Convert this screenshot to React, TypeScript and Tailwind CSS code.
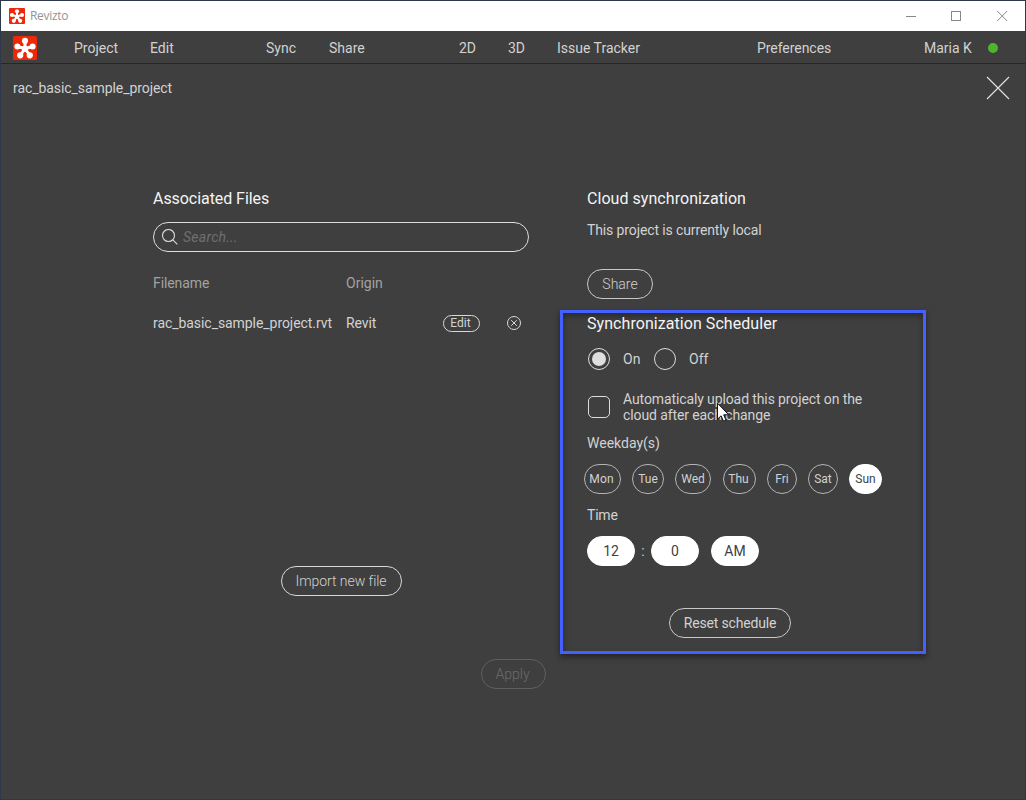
import React from "react";

const menu = [
  { label: "Project", cls: "w-[76px]" },
  { label: "Edit", cls: "w-[116px]" },
  { label: "Sync", cls: "w-[63px]" },
  { label: "Share", cls: "w-[130px]" },
  { label: "2D", cls: "w-[49px]" },
  { label: "3D", cls: "w-[49px]" },
  { label: "Issue Tracker", cls: "w-[200px]" },
  { label: "Preferences", cls: "w-[167px] tracking-[-0.05px]" },
  { label: "Maria K", cls: "w-[64px]" },
];

const days = [
  { label: "Mon", cls: "w-[37px] pr-[2px] tracking-[0.2px]" },
  { label: "Tue", cls: "w-[32px] ml-[11px]" },
  { label: "Wed", cls: "w-[36px] ml-[11px]" },
  { label: "Thu", cls: "w-[33px] ml-[12px] pr-[2px]" },
  { label: "Fri", cls: "w-[30px] ml-[11px]" },
  { label: "Sat", cls: "w-[30px] ml-[11px]" },
  { label: "Sun", cls: "w-[33px] ml-[11px]", active: true },
];

function Logo({ className }: { className: string }) {
  return (
    <svg viewBox="0 0 24 24" className={className}>
      <rect width="24" height="24" rx="1.5" fill="#ee2708" />
      <g stroke="#fff" strokeWidth="3">
        <path d="M12 12.5V6M12 12.5L5 10.8M12 12.5L19 10.8M12 12.5L7.8 18.5M12 12.5L16.2 18.5" />
      </g>
      <g fill="#fff">
        <circle cx="12" cy="12.8" r="3.2" />
        <circle cx="12" cy="4.8" r="3.1" />
        <circle cx="4.4" cy="10.6" r="3" />
        <circle cx="19.6" cy="10.6" r="3" />
        <circle cx="7.2" cy="19.3" r="3.1" />
        <circle cx="16.8" cy="19.3" r="3.1" />
      </g>
    </svg>
  );
}

function PillButton({ children, className = "" }: { children: React.ReactNode; className?: string }) {
  return (
    <button className={`flex h-[30px] items-center justify-center rounded-full border ${className}`}>
      {children}
    </button>
  );
}

function Heading({ children, className = "" }: { children: React.ReactNode; className?: string }) {
  return (
    <h2 className={`h-5 pt-px text-[16px] leading-5 text-[#f4f4f4] whitespace-nowrap ${className}`}>{children}</h2>
  );
}

export default function App() {
  return (
    <div
      className="flex h-[800px] w-[1026px] flex-col overflow-hidden border border-[#2d394a] bg-[#3f3f3f] text-[14px] text-[#d2d2d2]"
      style={{ fontFamily: 'Roboto, "Liberation Sans", sans-serif' }}
    >
      <header className="flex h-[30px] shrink-0 items-center bg-white pl-2">
        <Logo className="size-4" />
        <span
          className="ml-[5px] text-[12px] tracking-[-0.3px] text-[#949494]"
          style={{ fontFamily: '"Open Sans", "Noto Sans", sans-serif' }}
        >
          Revizto
        </span>
        <svg className="ml-auto mr-[17px] h-[11px] w-[102px]" viewBox="0 0 102 11" fill="none" stroke="#888">
          <path d="M0 5.5H10M45.5 .5H54.5V9.5H45.5Z" shapeRendering="crispEdges" />
          <path d="M91.2 0L101.2 10M101.2 0L91.2 10" />
        </svg>
      </header>

      <nav className="flex h-[33px] shrink-0 items-center border-b border-[#272727] pl-3">
        <Logo className="mt-[2px] size-6" />
        <div className="ml-[37px] flex pt-[2px]">
          {menu.map((m) => (
            <span key={m.label} className={`${m.cls} whitespace-nowrap leading-5`}>
              {m.label}
            </span>
          ))}
        </div>
        <span className="mt-[2px] size-[10px] rounded-full bg-[#4eb52d]" />
      </nav>

      <div className="flex h-12 shrink-0 items-center justify-between pr-[15px] pl-3">
        <span className="leading-5 tracking-[-0.07px]">rac_basic_sample_project</span>
        <svg className="size-6" viewBox="0 0 24 24" stroke="#e4e4e4" strokeWidth="1.1">
          <path d="M1 1L23 23M23 1L1 23" />
        </svg>
      </div>

      <main className="flex shrink-0 pt-[76px] pl-[152px]">
        <section className="flex w-[376px] flex-col">
          <Heading className="tracking-[-0.06px]">Associated Files</Heading>
          <div className="mt-[14px] flex h-[30px] items-center rounded-full border border-[#dedede] pl-2">
            <svg className="size-4" viewBox="0 0 16 16" fill="none" stroke="#dedede" strokeWidth="1.1">
              <circle cx="6.5" cy="6.5" r="6" />
              <path d="M10.8 10.8L15.3 15.3" />
            </svg>
            <span className="ml-[5px] italic tracking-[0.25px] text-[#6f6f6f]">Search...</span>
          </div>
          <div className="mt-[21px] flex h-5 items-center text-[#a2a2a2]">
            <span className="w-[193px] tracking-[-0.1px]">Filename</span>
            <span>Origin</span>
          </div>
          <div className="mt-5 flex h-5 items-center">
            <span className="w-[193px] whitespace-nowrap tracking-[-0.06px]">rac_basic_sample_project.rvt</span>
            <span className="w-[97px] tracking-[-0.1px]">Revit</span>
            <button className="flex h-[17px] w-[37px] items-center justify-center rounded-full border border-[#d8d8d8] pr-[2px] text-[12px]">
              Edit
            </button>
            <svg className="ml-[26px] size-4" viewBox="0 0 16 16" fill="none" stroke="#d8d8d8">
              <circle cx="8" cy="8" r="6.5" />
              <path d="M5.2 5.2L10.8 10.8M10.8 5.2L5.2 10.8" />
            </svg>
          </div>
          <PillButton className="mt-[233px] w-[121px] self-center border-[#d8d8d8] font-light tracking-[-0.05px]">
            Import new file
          </PillButton>
        </section>

        <section className="ml-[31px] flex w-[366px] flex-col">
          <div className="flex flex-col pl-[27px]">
            <Heading className="tracking-[0.05px]">Cloud synchronization</Heading>
            <p className="mt-3 leading-5 tracking-[-0.12px]">This project is currently local</p>
            <PillButton className="mt-[29px] w-[66px] border-[#c8c8c8] font-light">Share</PillButton>
          </div>

          <div className="mt-[11px] flex h-[344px] flex-col border-[3px] border-[#4461ff] pl-6 shadow-[0_3px_6px_rgba(0,0,0,0.45),inset_0_3px_6px_rgba(0,0,0,0.35)]">
            <Heading className="tracking-[0.06px]">Synchronization Scheduler</Heading>
            <div className="mt-[15px] flex h-[22px] items-center pl-px">
              <span className="flex size-[22px] items-center justify-center rounded-full border border-[#dcdcdc]">
                <span className="size-[14px] rounded-full bg-[#dedede]" />
              </span>
              <span className="ml-[13px] w-[31px]">On</span>
              <span className="size-[22px] rounded-full border border-[#dcdcdc]" />
              <span className="ml-[13px]">Off</span>
            </div>
            <div className="relative mt-[21px] flex h-8 items-center pl-px">
              <span className="size-[22px] rounded-[5px] border border-[#dcdcdc]" />
              <p className="ml-[13px] whitespace-nowrap leading-4 tracking-[-0.11px]">
                Automaticaly upload this project on the
                <br />
                cloud after each change
              </p>
              <svg className="absolute top-[11px] left-[129px] h-[21px] w-[14px]" viewBox="0 0 14 21">
                <path
                  d="M1.5 1.2V17.2L5.1 13.8L7.5 19.2L10 18.1L7.7 12.8H12.7Z"
                  fill="#fff"
                  stroke="#11111c"
                  strokeWidth="1"
                />
              </svg>
            </div>
            <p className="mt-[10px] leading-5">Weekday(s)</p>
            <div className="mt-[11px] -ml-[3px] flex text-[12px]">
              {days.map((d) => (
                <PillButton
                  key={d.label}
                  className={`${d.cls} ${d.active ? "border-white bg-white text-[#3f3f3f]" : "border-[#b4b4b4]"}`}
                >
                  {d.label}
                </PillButton>
              ))}
            </div>
            <p className="mt-[11px] leading-5 tracking-[-0.2px]">Time</p>
            <div className="mt-[11px] flex items-center text-[#3f3f3f]">
              <PillButton className="w-12 border-white bg-white">12</PillButton>
              <span className="w-4 text-center text-[#d2d2d2]">:</span>
              <PillButton className="w-12 border-white bg-white">0</PillButton>
              <PillButton className="ml-3 w-12 border-white bg-white">AM</PillButton>
            </div>
            <PillButton className="mt-[42px] ml-[82px] w-[122px] border-[#c8c8c8] tracking-[-0.18px]">
              Reset schedule
            </PillButton>
          </div>
        </section>
      </main>

      <PillButton className="mt-[5px] ml-px w-[65px] self-center border-[#606060] pr-[2px] font-light text-[#6c6c6c]">
        Apply
      </PillButton>
    </div>
  );
}
